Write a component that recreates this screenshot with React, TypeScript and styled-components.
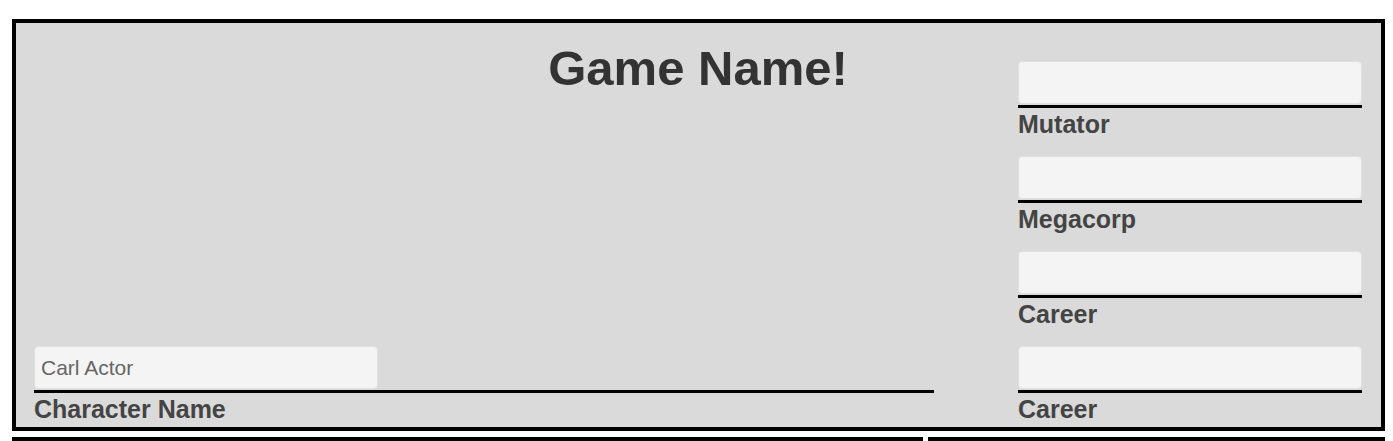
import React from "react";
import styled, { createGlobalStyle } from "styled-components";

const Global = createGlobalStyle`
  html, body { margin: 0; padding: 0; background: #ffffff; overflow: hidden; }
  body { font-family: "Liberation Sans", Arial, Helvetica, sans-serif; }
  * { box-sizing: border-box; }
`;

const Page = styled.div`
  padding: 19px 8px 0 12px;
  height: 441px;
  overflow: hidden;
`;

const Header = styled.section`
  border: 4px solid #000;
  background: #dadada;
  display: grid;
  grid-template-columns: 900px 344px;
  grid-template-rows: auto 1fr;
  column-gap: 84px;
  padding: 0 19px 4px 18px;
`;

const Title = styled.h1`
  grid-column: 1 / 3;
  grid-row: 1;
  margin: 17px 0 0;
  text-align: center;
  font-size: 49px;
  font-weight: 700;
  color: #333;
  line-height: normal;
`;

const FieldColumn = styled.div`
  grid-column: 2;
  grid-row: 1 / 3;
  display: flex;
  flex-direction: column;
  gap: 18px;
  padding-top: 38px;
`;

const LeftBottom = styled.div`
  grid-column: 1;
  grid-row: 2;
  align-self: end;
`;

const Field = styled.div`
  display: flex;
  flex-direction: column;
`;

const Input = styled.input<{ $w?: string }>`
  width: ${(p) => p.$w ?? "100%"};
  height: 43px;
  margin: 0 0 1px;
  padding: 0 6px;
  border: 1px solid #e0e0e0;
  border-radius: 4px;
  background: #f4f4f4;
  font-family: "Liberation Sans", Arial, sans-serif;
  font-size: 21px;
  color: #666;
  outline: none;
`;

const Rule = styled.div`
  height: 3px;
  background: #000;
`;

const Label = styled.label`
  margin-top: 2px;
  font-size: 25px;
  line-height: 28px;
  font-weight: 700;
  color: #444;
`;

const Lower = styled.div`
  display: grid;
  grid-template-columns: 911px 1fr;
  column-gap: 5px;
  margin-top: 6px;
`;

const Panel = styled.div`
  border: 4px solid #000;
  height: 120px;
  background: #fff;
`;

const rightFields = ["Mutator", "Megacorp", "Career", "Career"];

export default function App() {
  return (
    <>
      <Global />
      <Page>
        <Header>
          <Title>Game Name!</Title>
          <LeftBottom>
            <Field>
              <Input $w="344px" defaultValue="Carl Actor" />
              <Rule />
              <Label>Character Name</Label>
            </Field>
          </LeftBottom>
          <FieldColumn>
            {rightFields.map((f, i) => (
              <Field key={i}>
                <Input />
                <Rule />
                <Label>{f}</Label>
              </Field>
            ))}
          </FieldColumn>
        </Header>
        <Lower>
          <Panel />
          <Panel />
        </Lower>
      </Page>
    </>
  );
}
